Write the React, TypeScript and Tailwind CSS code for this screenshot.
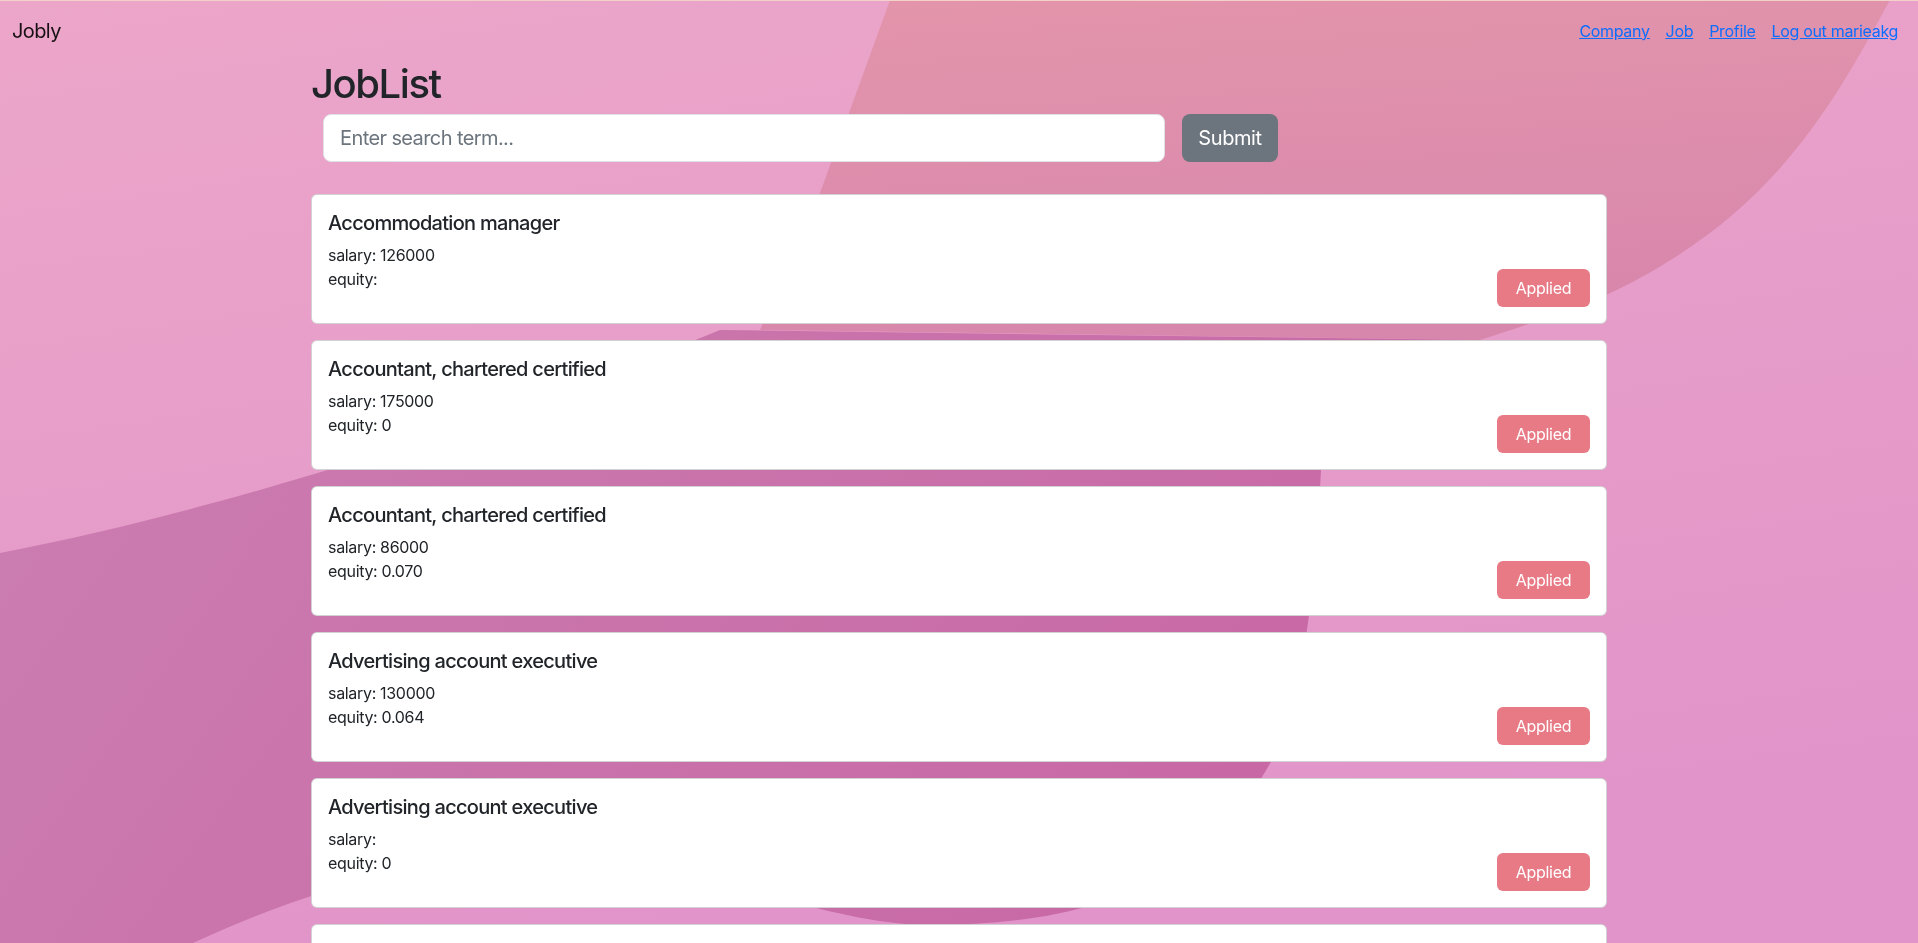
import React from "react";

interface Job {
  title: string;
  salary: number | null;
  equity: string | null;
}

const jobs: Job[] = [
  { title: "Accommodation manager", salary: 126000, equity: null },
  { title: "Accountant, chartered certified", salary: 175000, equity: "0" },
  { title: "Accountant, chartered certified", salary: 86000, equity: "0.070" },
  { title: "Advertising account executive", salary: 130000, equity: "0.064" },
  { title: "Advertising account executive", salary: null, equity: "0" },
  { title: "Advertising art director", salary: 92000, equity: "0.011" },
  { title: "Air broker", salary: 54000, equity: "0" },
];

const Background = () => (
  // wavy pink backdrop, pinned to the viewport
  <svg
    className="fixed inset-0 -z-10 h-full w-full"
    viewBox="0 0 1918 943"
    preserveAspectRatio="none"
  >
    <defs>
      <linearGradient id="base" x1="0" y1="0" x2="0.3" y2="1">
        <stop offset="0" stopColor="#eca6c9" />
        <stop offset="1" stopColor="#e194c9" />
      </linearGradient>
      <linearGradient id="top" x1="0" y1="0" x2="0.2" y2="1">
        <stop offset="0" stopColor="#e395ab" />
        <stop offset="1" stopColor="#d887ac" />
      </linearGradient>
      <linearGradient id="mid" x1="0" y1="0" x2="1" y2="0.3">
        <stop offset="0" stopColor="#cb7eb1" />
        <stop offset="1" stopColor="#c868a5" />
      </linearGradient>
    </defs>
    <rect width="1918" height="943" fill="url(#base)" />
    <path
      d="M890 0 L1890 0 C1830 110 1770 220 1600 298 C1550 318 1510 330 1480 340 L760 330 L820 193 Z"
      fill="url(#top)"
    />
    <path
      d="M0 553 C200 515 480 430 720 330 L1480 340 C1390 380 1330 420 1321 469 C1316 580 1305 690 1272 760 C1200 890 1080 925 930 925 C820 925 700 860 560 858 C440 856 330 880 193 943 L0 943 Z"
      fill="url(#mid)"
    />
  </svg>
);

const JobCard = ({ title, salary, equity }: Job) => (
  <div className="mb-4 h-[130px] rounded-md border border-[rgba(0,0,0,0.175)] bg-white p-4">
    <h5 className="mb-2 text-[20px] leading-[24px] font-medium tracking-[-0.035em] text-[#212529]">
      {title}
    </h5>
    <div className="flex h-16 items-end justify-between">
      <div className="self-start text-[16px] leading-6 text-[#212529]">
        <div>salary: {salary ?? ""}</div>
        <div>equity: {equity ?? ""}</div>
      </div>
      <button className="h-[38px] w-[93px] rounded-md bg-[#e77a85] text-[16px] text-white">
        Applied
      </button>
    </div>
  </div>
);

export default function App() {
  return (
    <div className="min-h-screen border-t border-[#f3d0c8] font-['Inter',sans-serif] tracking-[-0.02em] text-[#212529]">
      <Background />
      {/* Navbar */}
      <nav className="flex h-[59px] items-center justify-between pr-5 pl-3">
        <a className="text-[20px] tracking-[-0.03em] text-black/90">Jobly</a>
        <div className="flex gap-4 text-[16px] text-[#0d6efd] underline">
          <a>Company</a>
          <a>Job</a>
          <a>Profile</a>
          <a>Log out marieakg</a>
        </div>
      </nav>

      <div className="mx-auto w-[1296px]">
        <h1 className="mb-[6px] text-[40px] leading-[48px] font-medium tracking-[-0.036em]">JobList</h1>
        <form className="ml-3 flex gap-[17px]" onSubmit={(e) => e.preventDefault()}>
          <input
            className="h-12 w-[842px] rounded-lg border border-[#dee2e6] bg-white px-4 text-[20px] tracking-[-0.03em] placeholder:text-[#6c757d]"
            placeholder="Enter search term..."
          />
          <button className="h-12 w-24 rounded-lg bg-[#6c757d] text-[20px] tracking-[-0.02em] text-white">
            Submit
          </button>
        </form>

        <div className="mt-8">
          {jobs.map((job, i) => (
            <JobCard key={i} {...job} />
          ))}
        </div>
      </div>
    </div>
  );
}
